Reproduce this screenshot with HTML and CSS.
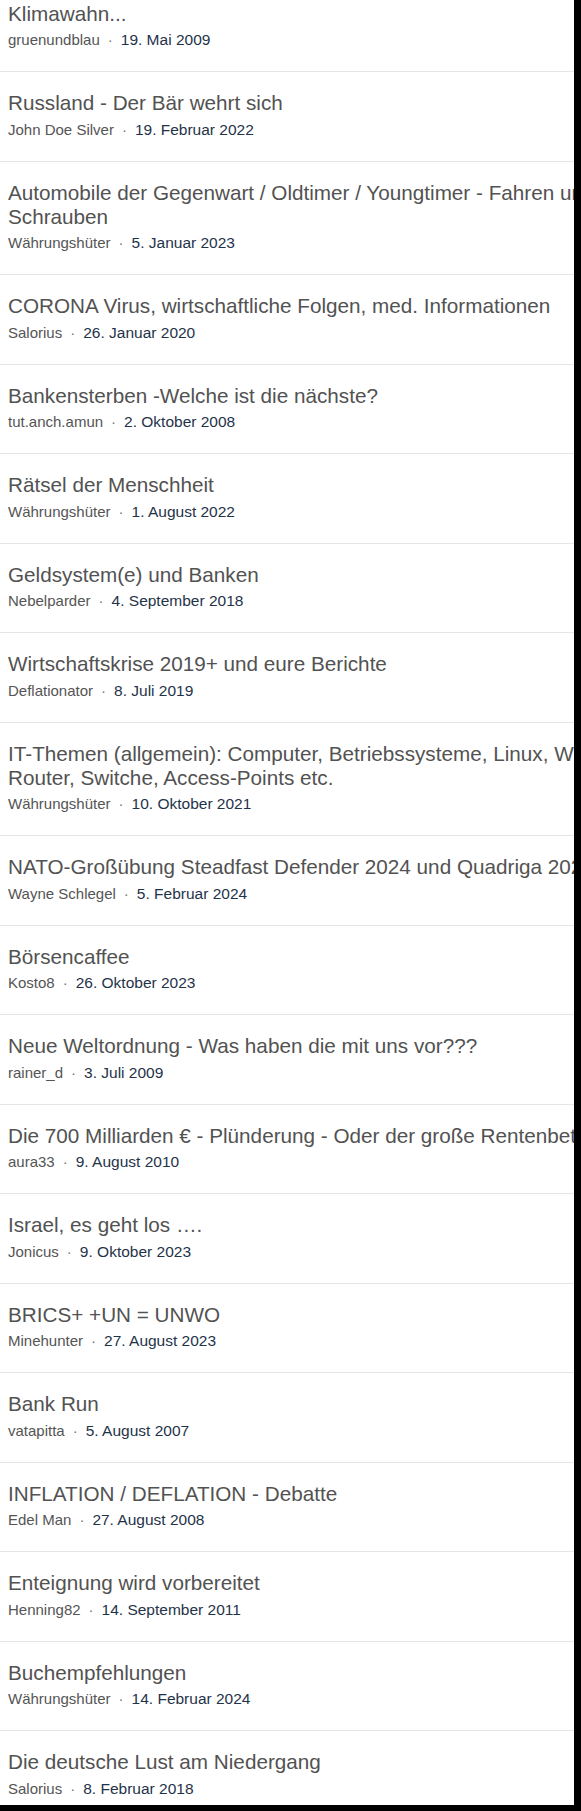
FILE: index.html
```html
<!DOCTYPE html>
<html lang="de">
<head>
<meta charset="utf-8">
<title>Themen</title>
<link rel="stylesheet" href="styles.css">
</head>
<body>
<div class="viewport">
  <ul class="threads">
    <li class="thread"><a class="title">Klimawahn...</a><div class="meta"><span class="author">gruenundblau</span><span class="dot">·</span><span class="date">19. Mai 2009</span></div></li>
    <li class="thread"><a class="title">Russland - Der Bär wehrt sich</a><div class="meta"><span class="author">John Doe Silver</span><span class="dot">·</span><span class="date">19. Februar 2022</span></div></li>
    <li class="thread"><a class="title">Automobile der Gegenwart / Oldtimer / Youngtimer - Fahren und Schrauben</a><div class="meta"><span class="author">Währungshüter</span><span class="dot">·</span><span class="date">5. Januar 2023</span></div></li>
    <li class="thread"><a class="title">CORONA Virus, wirtschaftliche Folgen, med. Informationen</a><div class="meta"><span class="author">Salorius</span><span class="dot">·</span><span class="date">26. Januar 2020</span></div></li>
    <li class="thread"><a class="title">Bankensterben -Welche ist die nächste?</a><div class="meta"><span class="author">tut.anch.amun</span><span class="dot">·</span><span class="date">2. Oktober 2008</span></div></li>
    <li class="thread"><a class="title">Rätsel der Menschheit</a><div class="meta"><span class="author">Währungshüter</span><span class="dot">·</span><span class="date">1. August 2022</span></div></li>
    <li class="thread"><a class="title">Geldsystem(e) und Banken</a><div class="meta"><span class="author">Nebelparder</span><span class="dot">·</span><span class="date">4. September 2018</span></div></li>
    <li class="thread"><a class="title">Wirtschaftskrise 2019+ und eure Berichte</a><div class="meta"><span class="author">Deflationator</span><span class="dot">·</span><span class="date">8. Juli 2019</span></div></li>
    <li class="thread"><a class="title">IT-Themen (allgemein): Computer, Betriebssysteme, Linux, Windows, Router, Switche, Access-Points etc.</a><div class="meta"><span class="author">Währungshüter</span><span class="dot">·</span><span class="date">10. Oktober 2021</span></div></li>
    <li class="thread"><a class="title">NATO-Großübung Steadfast Defender 2024 und Quadriga 2024</a><div class="meta"><span class="author">Wayne Schlegel</span><span class="dot">·</span><span class="date">5. Februar 2024</span></div></li>
    <li class="thread"><a class="title">Börsencaffee</a><div class="meta"><span class="author">Kosto8</span><span class="dot">·</span><span class="date">26. Oktober 2023</span></div></li>
    <li class="thread"><a class="title">Neue Weltordnung - Was haben die mit uns vor???</a><div class="meta"><span class="author">rainer_d</span><span class="dot">·</span><span class="date">3. Juli 2009</span></div></li>
    <li class="thread"><a class="title">Die 700 Milliarden € - Plünderung - Oder der große Rentenbetrug</a><div class="meta"><span class="author">aura33</span><span class="dot">·</span><span class="date">9. August 2010</span></div></li>
    <li class="thread"><a class="title">Israel, es geht los ….</a><div class="meta"><span class="author">Jonicus</span><span class="dot">·</span><span class="date">9. Oktober 2023</span></div></li>
    <li class="thread"><a class="title">BRICS+ +UN = UNWO</a><div class="meta"><span class="author">Minehunter</span><span class="dot">·</span><span class="date">27. August 2023</span></div></li>
    <li class="thread"><a class="title">Bank Run</a><div class="meta"><span class="author">vatapitta</span><span class="dot">·</span><span class="date">5. August 2007</span></div></li>
    <li class="thread"><a class="title">INFLATION / DEFLATION - Debatte</a><div class="meta"><span class="author">Edel Man</span><span class="dot">·</span><span class="date">27. August 2008</span></div></li>
    <li class="thread"><a class="title">Enteignung wird vorbereitet</a><div class="meta"><span class="author">Henning82</span><span class="dot">·</span><span class="date">14. September 2011</span></div></li>
    <li class="thread"><a class="title">Buchempfehlungen</a><div class="meta"><span class="author">Währungshüter</span><span class="dot">·</span><span class="date">14. Februar 2024</span></div></li>
    <li class="thread"><a class="title">Die deutsche Lust am Niedergang</a><div class="meta"><span class="author">Salorius</span><span class="dot">·</span><span class="date">8. Februar 2018</span></div></li>
  </ul>
</div>
</body>
</html>
```

FILE: styles.css
```css
html, body {
  margin: 0;
  padding: 0;
  background: #000;
}

.viewport {
  width: 574px;
  height: 1805px;
  overflow: hidden;
  background: #fff;
}

.threads {
  list-style: none;
  margin: -17.5px 0 0 0;
  padding: 0;
  width: 680px;
  font-family: "Liberation Sans", Arial, sans-serif;
}

.thread {
  padding: 19px 8px 21px 8px;
  border-bottom: 1px solid #e5e5e5;
}

.title {
  display: block;
  font-size: 20.7px;
  line-height: 24px;
  color: #525252;
  text-decoration: none;
}

.meta {
  margin-top: 4.5px;
  font-size: 15px;
  line-height: 20px;
  display: flex;
  align-items: baseline;
}

.author {
  color: #555;
}

.dot {
  color: #777;
  margin: 0 8px 0 8px;
}

.date {
  font-size: 15.5px;
  color: #1f3349;
}
```
